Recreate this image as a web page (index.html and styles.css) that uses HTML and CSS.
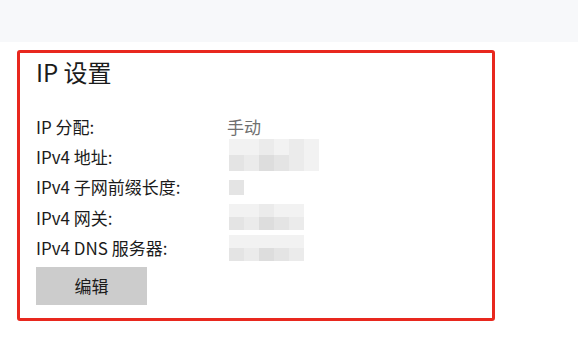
FILE: index.html
```html
<!DOCTYPE html>
<html lang="zh-CN">

<head>
    <meta charset="UTF-8">
    <meta name="viewport" content="width=device-width, initial-scale=1.0">
    <title>IP 设置</title>
    <link rel="stylesheet" href="styles.css">
</head>

<body>
    <div class="topbar"></div>

    <div class="card">
        <h2 class="title">IP 设置</h2>

        <div class="rows">
            <div class="label">IP 分配:</div>
            <div class="value muted">手动</div>

            <div class="label">IPv4 地址:</div>
            <div class="value">
                <!-- blurred address -->
                <div class="mosaic addr">
                    <div class="strip">
                        <span class="c s1"></span><span class="c s1"></span><span class="c s2"></span><span class="c s1"></span><span class="c s2"></span><span class="c s1"></span>
                    </div>
                    <div class="strip">
                        <span class="c s3"></span><span class="c s2"></span><span class="c s4"></span><span class="c s3"></span><span class="c s2"></span><span class="c s1"></span>
                    </div>
                </div>
            </div>

            <div class="label">IPv4 子网前缀长度:</div>
            <div class="value">
                <div class="mosaic prefix">
                    <div class="strip"><span class="c s3"></span></div>
                </div>
            </div>

            <div class="label">IPv4 网关:</div>
            <div class="value">
                <div class="mosaic gw">
                    <div class="strip">
                        <span class="c s1"></span><span class="c s1"></span><span class="c s2"></span><span class="c s1"></span><span class="c s1"></span>
                    </div>
                    <div class="strip">
                        <span class="c s3"></span><span class="c s2"></span><span class="c s4"></span><span class="c s3"></span><span class="c s2"></span>
                    </div>
                </div>
            </div>

            <div class="label">IPv4 DNS 服务器:</div>
            <div class="value">
                <div class="mosaic dns">
                    <div class="strip">
                        <span class="c s1"></span><span class="c s1"></span><span class="c s1"></span><span class="c s1"></span><span class="c s1"></span>
                    </div>
                    <div class="strip">
                        <span class="c s3"></span><span class="c s2"></span><span class="c s4"></span><span class="c s3"></span><span class="c s2"></span>
                    </div>
                </div>
            </div>
        </div>

        <button class="button">编辑</button>
    </div>
</body>

</html>
```

FILE: styles.css
```css
* {
    margin: 0;
    padding: 0;
    box-sizing: border-box;
}

body {
    background-color: white;
    font-family: "Noto Sans CJK SC", "Noto Sans", sans-serif;
    color: #1b1b1b;
}

.topbar {
    height: 42px;
    background-color: #f7f8fa;
}

.card {
    width: 478px;
    height: 271px;
    margin: 8px 0 0 17px;
    padding: 0 16px;
    border: 3px solid #e8281e;
    border-radius: 3px;
}

.title {
    font-size: 24px;
    font-weight: normal;
    line-height: 32px;
    margin-top: 3px;
}

.rows {
    display: grid;
    grid-template-columns: 191px 1fr;
    grid-auto-rows: 30.4px;
    margin-top: 23px;
    font-size: 17px;
}

.label,
.value {
    display: flex;
    align-items: center;
}

.muted {
    color: #707070;
}

/* pixelated blur over the hidden addresses */
.mosaic {
    display: flex;
    flex-direction: column;
    margin-left: 2px;
}

.strip {
    display: flex;
}

.c {
    display: block;
    width: 15px;
    height: 16px;
}

.s1 { background-color: #f2f2f2; }
.s2 { background-color: #ebebeb; }
.s3 { background-color: #e4e4e4; }
.s4 { background-color: #dddddd; }

.addr {
    margin-top: -3px;
}

.prefix .c {
    height: 15px;
}

.prefix {
    margin-top: 1px;
}

.gw .c {
    height: 13px;
}

.dns .c {
    height: 13px;
}

.button {
    display: block;
    width: 111px;
    height: 38px;
    margin-top: 4px;
    border: none;
    background-color: #cccccc;
    color: #1b1b1b;
    font-family: "Noto Sans CJK SC", "Noto Sans", sans-serif;
    font-size: 17px;
}
```
